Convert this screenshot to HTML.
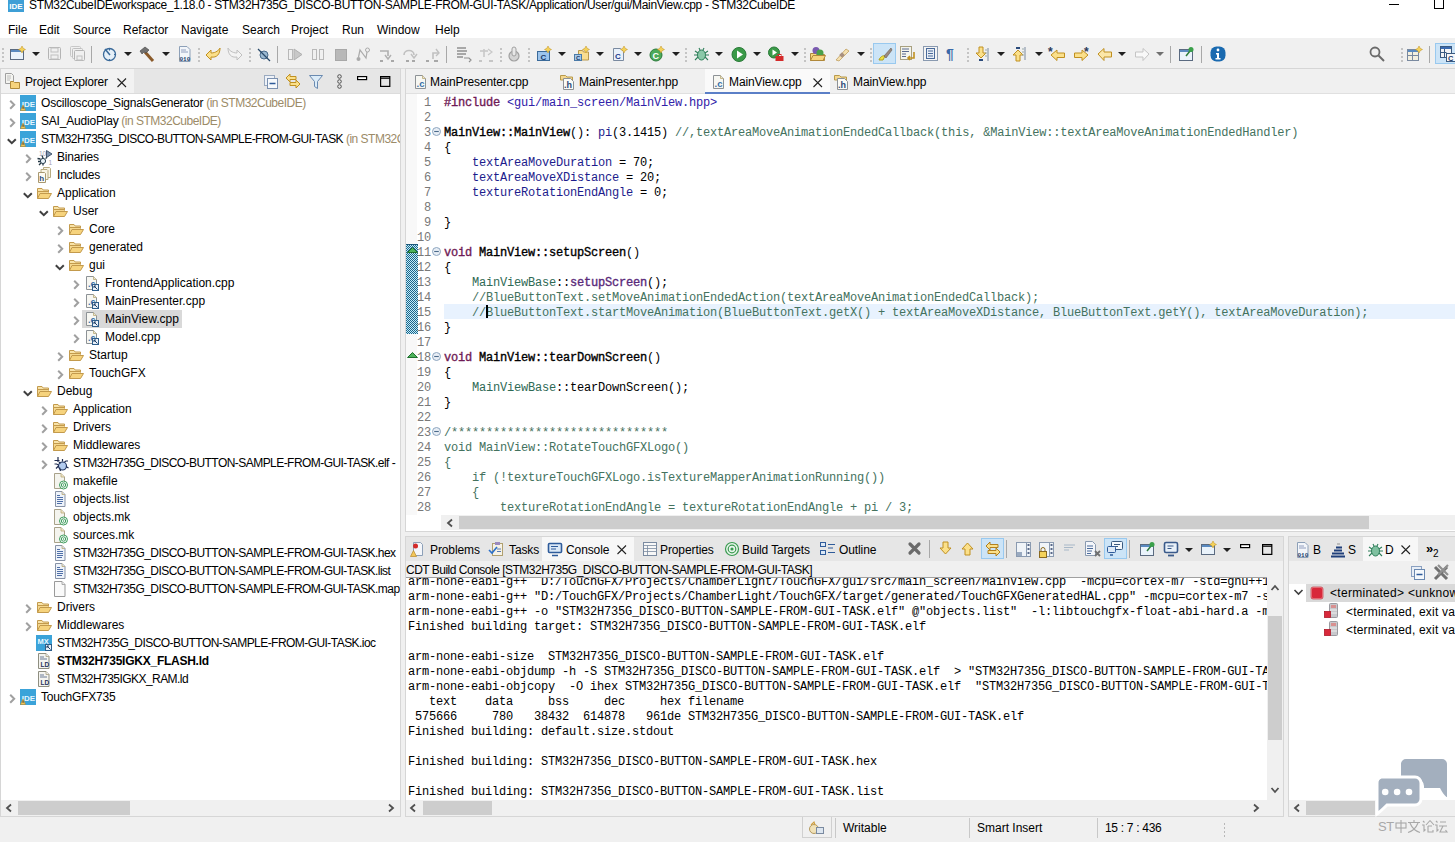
<!DOCTYPE html><html><head><meta charset="utf-8"><style>
*{margin:0;padding:0;box-sizing:border-box}
html,body{width:1455px;height:842px;overflow:hidden;background:#f0f0f0;font-family:"Liberation Sans",sans-serif;font-size:12px;color:#000}
.a{position:absolute}
.t{position:absolute;white-space:pre;line-height:14px;font-size:12px}
.m{position:absolute;white-space:pre;font-family:"Liberation Mono",monospace;font-size:12px;letter-spacing:-0.2px;line-height:15px}
svg{position:absolute;overflow:visible}
.kw{color:#6f1a55;-webkit-text-stroke:0.35px #6f1a55}
.fd{color:#1c1c8c}
.inc{color:#3020a8}
.cm{color:#44725e}
.cls{color:#2f6a55}
.fn{color:#5a2a7a;-webkit-text-stroke:0.35px #5a2a7a}
.b{-webkit-text-stroke:0.35px #000}
</style></head><body><div class="a" style="left:0px;top:0px;width:1455px;height:38px;background:#ffffff;"></div><svg style="left:8px;top:0px" width="16" height="12" viewBox="0 0 16 12"><rect x="0" y="-4" width="16" height="16" fill="#3e9fd6"/><text x="8" y="9" font-family="Liberation Sans" font-weight="bold" font-size="8" fill="#fff" text-anchor="middle">IDE</text></svg><div class="t" style="left:29px;top:-2px;letter-spacing:-0.33px">STM32CubeIDEworkspace_1.18.0 - STM32H735G_DISCO-BUTTON-SAMPLE-FROM-GUI-TASK/Application/User/gui/MainView.cpp - STM32CubeIDE</div><div class="a" style="left:1389px;top:4px;width:10px;height:1px;background:#000;"></div><div class="a" style="left:1434px;top:-2px;width:10px;height:11px;border:1px solid #000"></div><div class="t" style="left:8px;top:23px;">File</div><div class="t" style="left:39px;top:23px;">Edit</div><div class="t" style="left:73px;top:23px;">Source</div><div class="t" style="left:123px;top:23px;">Refactor</div><div class="t" style="left:181px;top:23px;">Navigate</div><div class="t" style="left:242px;top:23px;">Search</div><div class="t" style="left:291px;top:23px;">Project</div><div class="t" style="left:342px;top:23px;">Run</div><div class="t" style="left:377px;top:23px;">Window</div><div class="t" style="left:435px;top:23px;">Help</div><div class="a" style="left:0px;top:38px;width:1455px;height:30px;background:#f0f0f0;"></div><div class="a" style="left:0px;top:68px;width:1455px;height:1px;background:#dcdcdc;"></div><div class="a" style="left:2px;top:48px;width:2px;height:2px;background:#c4c4c4;"></div><div class="a" style="left:2px;top:52px;width:2px;height:2px;background:#c4c4c4;"></div><div class="a" style="left:2px;top:56px;width:2px;height:2px;background:#c4c4c4;"></div><div class="a" style="left:2px;top:60px;width:2px;height:2px;background:#c4c4c4;"></div><svg style="left:32px;top:52px" width="8" height="4" viewBox="0 0 8 4"><path d="M0 0 h8 L4 4z" fill="#202020"/></svg><svg style="left:124px;top:52px" width="8" height="4" viewBox="0 0 8 4"><path d="M0 0 h8 L4 4z" fill="#202020"/></svg><svg style="left:162px;top:52px" width="8" height="4" viewBox="0 0 8 4"><path d="M0 0 h8 L4 4z" fill="#202020"/></svg><svg style="left:558px;top:52px" width="8" height="4" viewBox="0 0 8 4"><path d="M0 0 h8 L4 4z" fill="#202020"/></svg><svg style="left:596px;top:52px" width="8" height="4" viewBox="0 0 8 4"><path d="M0 0 h8 L4 4z" fill="#202020"/></svg><svg style="left:634px;top:52px" width="8" height="4" viewBox="0 0 8 4"><path d="M0 0 h8 L4 4z" fill="#202020"/></svg><svg style="left:672px;top:52px" width="8" height="4" viewBox="0 0 8 4"><path d="M0 0 h8 L4 4z" fill="#202020"/></svg><svg style="left:715px;top:52px" width="8" height="4" viewBox="0 0 8 4"><path d="M0 0 h8 L4 4z" fill="#202020"/></svg><svg style="left:753px;top:52px" width="8" height="4" viewBox="0 0 8 4"><path d="M0 0 h8 L4 4z" fill="#202020"/></svg><svg style="left:791px;top:52px" width="8" height="4" viewBox="0 0 8 4"><path d="M0 0 h8 L4 4z" fill="#202020"/></svg><svg style="left:857px;top:52px" width="8" height="4" viewBox="0 0 8 4"><path d="M0 0 h8 L4 4z" fill="#202020"/></svg><svg style="left:997px;top:52px" width="8" height="4" viewBox="0 0 8 4"><path d="M0 0 h8 L4 4z" fill="#202020"/></svg><svg style="left:1035px;top:52px" width="8" height="4" viewBox="0 0 8 4"><path d="M0 0 h8 L4 4z" fill="#202020"/></svg><svg style="left:1118px;top:52px" width="8" height="4" viewBox="0 0 8 4"><path d="M0 0 h8 L4 4z" fill="#202020"/></svg><svg style="left:1156px;top:52px" width="8" height="4" viewBox="0 0 8 4"><path d="M0 0 h8 L4 4z" fill="#707070"/></svg><div class="a" style="left:198px;top:48px;width:2px;height:2px;background:#c4c4c4;"></div><div class="a" style="left:198px;top:52px;width:2px;height:2px;background:#c4c4c4;"></div><div class="a" style="left:198px;top:56px;width:2px;height:2px;background:#c4c4c4;"></div><div class="a" style="left:198px;top:60px;width:2px;height:2px;background:#c4c4c4;"></div><div class="a" style="left:249px;top:48px;width:2px;height:2px;background:#c4c4c4;"></div><div class="a" style="left:249px;top:52px;width:2px;height:2px;background:#c4c4c4;"></div><div class="a" style="left:249px;top:56px;width:2px;height:2px;background:#c4c4c4;"></div><div class="a" style="left:249px;top:60px;width:2px;height:2px;background:#c4c4c4;"></div><div class="a" style="left:500px;top:48px;width:2px;height:2px;background:#c4c4c4;"></div><div class="a" style="left:500px;top:52px;width:2px;height:2px;background:#c4c4c4;"></div><div class="a" style="left:500px;top:56px;width:2px;height:2px;background:#c4c4c4;"></div><div class="a" style="left:500px;top:60px;width:2px;height:2px;background:#c4c4c4;"></div><div class="a" style="left:528px;top:48px;width:2px;height:2px;background:#c4c4c4;"></div><div class="a" style="left:528px;top:52px;width:2px;height:2px;background:#c4c4c4;"></div><div class="a" style="left:528px;top:56px;width:2px;height:2px;background:#c4c4c4;"></div><div class="a" style="left:528px;top:60px;width:2px;height:2px;background:#c4c4c4;"></div><div class="a" style="left:685px;top:48px;width:2px;height:2px;background:#c4c4c4;"></div><div class="a" style="left:685px;top:52px;width:2px;height:2px;background:#c4c4c4;"></div><div class="a" style="left:685px;top:56px;width:2px;height:2px;background:#c4c4c4;"></div><div class="a" style="left:685px;top:60px;width:2px;height:2px;background:#c4c4c4;"></div><div class="a" style="left:804px;top:48px;width:2px;height:2px;background:#c4c4c4;"></div><div class="a" style="left:804px;top:52px;width:2px;height:2px;background:#c4c4c4;"></div><div class="a" style="left:804px;top:56px;width:2px;height:2px;background:#c4c4c4;"></div><div class="a" style="left:804px;top:60px;width:2px;height:2px;background:#c4c4c4;"></div><div class="a" style="left:870px;top:48px;width:2px;height:2px;background:#c4c4c4;"></div><div class="a" style="left:870px;top:52px;width:2px;height:2px;background:#c4c4c4;"></div><div class="a" style="left:870px;top:56px;width:2px;height:2px;background:#c4c4c4;"></div><div class="a" style="left:870px;top:60px;width:2px;height:2px;background:#c4c4c4;"></div><div class="a" style="left:967px;top:48px;width:2px;height:2px;background:#c4c4c4;"></div><div class="a" style="left:967px;top:52px;width:2px;height:2px;background:#c4c4c4;"></div><div class="a" style="left:967px;top:56px;width:2px;height:2px;background:#c4c4c4;"></div><div class="a" style="left:967px;top:60px;width:2px;height:2px;background:#c4c4c4;"></div><div class="a" style="left:1401px;top:48px;width:2px;height:2px;background:#c4c4c4;"></div><div class="a" style="left:1401px;top:52px;width:2px;height:2px;background:#c4c4c4;"></div><div class="a" style="left:1401px;top:56px;width:2px;height:2px;background:#c4c4c4;"></div><div class="a" style="left:1401px;top:60px;width:2px;height:2px;background:#c4c4c4;"></div><div class="a" style="left:91px;top:46px;width:1px;height:17px;background:#a8a8a8;"></div><div class="a" style="left:277px;top:46px;width:1px;height:17px;background:#a8a8a8;"></div><div class="a" style="left:446px;top:46px;width:1px;height:17px;background:#a8a8a8;"></div><div class="a" style="left:1170px;top:46px;width:1px;height:17px;background:#a8a8a8;"></div><div class="a" style="left:1201px;top:46px;width:1px;height:17px;background:#a8a8a8;"></div><div class="a" style="left:1429px;top:46px;width:1px;height:17px;background:#a8a8a8;"></div><div class="a" style="left:873px;top:43px;width:23px;height:21px;background:#cce4f7;border:1px solid #99c9ef"></div><div class="a" style="left:1435px;top:43px;width:20px;height:21px;background:#cce4f7;border:1px solid #99c9ef;border-right:none"></div><svg style="left:877px;top:46px" width="16" height="16" viewBox="0 0 16 16"><path d="M2 14 C3 11 6 9 8 10 L6 14Z" fill="#f0e040" stroke="#b0a020"/><path d="M7 10 L14 2 L15 4 L9 12Z" fill="#9a8a80" stroke="#6a5a50" stroke-width="0.6"/></svg><svg style="left:1440px;top:46px" width="16" height="16" viewBox="0 0 16 16"><rect x="0.5" y="0.5" width="11" height="11" fill="#f4f4f4" stroke="#3a5a80"/><rect x="1" y="1" width="10" height="2" fill="#3a6ab0"/><path d="M0.5 6.5 h6 M4.5 3 v8" stroke="#3a5a80"/><rect x="6.5" y="7.5" width="9" height="8" fill="#f8f8f8" stroke="#3a5a80"/><text x="8" y="14.5" font-family="Liberation Sans" font-weight="bold" font-size="7.5" fill="#1a3a6a">C</text></svg><svg style="left:10px;top:46px" width="16" height="16" viewBox="0 0 16 16"><rect x="0.5" y="3.5" width="13" height="10" fill="#eaf3fb" stroke="#5a6a80" stroke-width="1"/><rect x="1" y="4" width="12" height="2" fill="#5a8ac0"/><path d="M12 0 l1.2 2.3 2.3 1.2 -2.3 1.2 -1.2 2.3 -1.2 -2.3 -2.3 -1.2 2.3 -1.2z" fill="#f4d25a" stroke="#c09020" stroke-width="0.5"/></svg><svg style="left:47px;top:46px" width="16" height="16" viewBox="0 0 16 16"><rect x="1.5" y="1.5" width="12" height="12" rx="1" fill="none" stroke="#b4b4b4" stroke-width="1"/><rect x="4" y="2" width="7" height="4" fill="none" stroke="#c0c0c0"/><rect x="4" y="9" width="7" height="4" fill="none" stroke="#c0c0c0"/></svg><svg style="left:70px;top:46px" width="16" height="16" viewBox="0 0 16 16"><rect x="0.5" y="0.5" width="10" height="10" rx="1" fill="none" stroke="#c8c8c8"/><rect x="2.5" y="2.5" width="10" height="10" rx="1" fill="#f0f0f0" stroke="#c0c0c0"/><rect x="4.5" y="4.5" width="10" height="10" rx="1" fill="#f0f0f0" stroke="#b4b4b4"/><rect x="7" y="10" width="5" height="4" fill="none" stroke="#c0c0c0"/></svg><svg style="left:102px;top:46px" width="16" height="16" viewBox="0 0 16 16"><circle cx="7.5" cy="8.5" r="6" fill="#e6f0f8" stroke="#3a6a9a" stroke-width="1.3"/><path d="M3 3 L8 9" stroke="#3a6a9a" stroke-width="1.5"/><path d="M7.5 3 v1.5 M12 8.5 h1.5 M7.5 13 v1.5" stroke="#3a6a9a"/></svg><svg style="left:139px;top:46px" width="16" height="16" viewBox="0 0 16 16"><path d="M6 6 L14 15" stroke="#8a5a2a" stroke-width="3"/><path d="M1 5 L6 1 L10 4 L7 7 L5 6 L3 8Z" fill="#707070" stroke="#404040" stroke-width="0.6"/></svg><svg style="left:177px;top:46px" width="16" height="16" viewBox="0 0 16 16"><path d="M2.5 0.5 h7.5 l3 3 v12 h-10.5z" fill="#f3f6fa" stroke="#8da0b8" stroke-width="1"/><path d="M4 4 h5 M4 6 h7" stroke="#7a8ab0" stroke-width="0.8"/><text x="2.5" y="14.5" font-family="Liberation Mono" font-weight="bold" font-size="6" fill="#1f3f6a">010</text></svg><svg style="left:205px;top:46px" width="16" height="16" viewBox="0 0 16 16"><path d="M1 9 L6 4 L6 7 C11 7 14 4 15 2 C15 8 12 12 6 11 L6 14Z" fill="#fbe08a" stroke="#c09020" stroke-width="1"/></svg><svg style="left:227px;top:46px" width="16" height="16" viewBox="0 0 16 16"><path d="M15 9 L10 4 L10 7 C5 7 2 4 1 2 C1 8 4 12 10 11 L10 14Z" fill="#f4f4f4" stroke="#c0c0c0" stroke-width="1"/></svg><svg style="left:256px;top:46px" width="16" height="16" viewBox="0 0 16 16"><circle cx="8" cy="9" r="4" fill="#9ab8d0" stroke="#4a6a8a" stroke-width="1"/><path d="M2 3 L14 15" stroke="#2a4a6a" stroke-width="1.3"/></svg><svg style="left:287px;top:46px" width="16" height="16" viewBox="0 0 16 16"><rect x="1.5" y="3.5" width="4" height="10" fill="none" stroke="#b8b8b8"/><path d="M7 3 L15 8.5 L7 14Z" fill="#c8c8c8" stroke="#b0b0b0"/></svg><svg style="left:310px;top:46px" width="16" height="16" viewBox="0 0 16 16"><rect x="2.5" y="3.5" width="4" height="10" fill="none" stroke="#b8b8b8"/><rect x="9.5" y="3.5" width="4" height="10" fill="none" stroke="#b8b8b8"/></svg><svg style="left:333px;top:46px" width="16" height="16" viewBox="0 0 16 16"><rect x="2.5" y="3.5" width="11" height="11" fill="#b8b8b8" stroke="#a8a8a8"/></svg><svg style="left:355px;top:46px" width="16" height="16" viewBox="0 0 16 16"><circle cx="3.5" cy="13" r="2" fill="#aaa"/><circle cx="12.5" cy="4" r="2" fill="none" stroke="#aaa"/><path d="M3.5 11 L5 4 L11 12 L12 6" stroke="#aaa" stroke-width="1.2" fill="none"/></svg><svg style="left:379px;top:46px" width="16" height="16" viewBox="0 0 16 16"><path d="M1 5 h8 v5" stroke="#b0b0b0" stroke-width="1.6" fill="none"/><path d="M6 9 L9 13 L12 9" stroke="#b0b0b0" stroke-width="1.4" fill="none"/><path d="M1 15 h3 M12 15 h3" stroke="#909090" stroke-width="1.5"/></svg><svg style="left:402px;top:46px" width="16" height="16" viewBox="0 0 16 16"><path d="M2 9 C2 3 12 3 12 9" stroke="#c0c0c0" stroke-width="1.6" fill="none"/><path d="M9 8 L12 12 L15 8" stroke="#c0c0c0" stroke-width="1.4" fill="none"/><path d="M4 15 h3 M10 15 h3" stroke="#909090" stroke-width="1.5"/></svg><svg style="left:425px;top:46px" width="16" height="16" viewBox="0 0 16 16"><path d="M8 13 v-6 h5" stroke="#c0c0c0" stroke-width="1.6" fill="none"/><path d="M11 3 L14 7 L11 10" stroke="#c0c0c0" stroke-width="1.4" fill="none"/><path d="M1 15 h3 M9 15 h4" stroke="#909090" stroke-width="1.5"/></svg><svg style="left:456px;top:46px" width="16" height="16" viewBox="0 0 16 16"><path d="M1 2 h9 M1 5 h10 M1 8 h9 M1 11 h6" stroke="#909090" stroke-width="1.5"/><path d="M8 12 h5 l2 2 -2 2" stroke="#909090" stroke-width="1.2" fill="none"/></svg><svg style="left:478px;top:46px" width="16" height="16" viewBox="0 0 16 16"><path d="M2 5 h8" stroke="#c8c8c8" stroke-width="1.6"/><path d="M6 3 v8" stroke="#c8c8c8" stroke-width="1.6"/><path d="M10 3 L14 6 L10 9" stroke="#c8c8c8" stroke-width="1.2" fill="none"/><path d="M1 15 h3 M11 15 h4" stroke="#b8b8b8" stroke-width="1.5"/></svg><svg style="left:506px;top:46px" width="16" height="16" viewBox="0 0 16 16"><circle cx="8" cy="10" r="5" fill="#d4d4d4" stroke="#a0a0a0" stroke-width="1.2"/><rect x="6" y="1" width="4" height="9" rx="2" fill="#e8e8e8" stroke="#a0a0a0"/></svg><svg style="left:536px;top:46px" width="16" height="16" viewBox="0 0 16 16"><rect x="1.5" y="5.5" width="12" height="9" fill="#9cc4ec" stroke="#3a6a9a" stroke-width="1"/><text x="4.5" y="13.5" font-family="Liberation Sans" font-weight="bold" font-size="8" fill="#1a3a6a">C</text><path d="M12 0 l1.2 2.3 2.3 1.2 -2.3 1.2 -1.2 2.3 -1.2 -2.3 -2.3 -1.2 2.3 -1.2z" fill="#f4d25a" stroke="#c09020" stroke-width="0.5"/></svg><svg style="left:574px;top:46px" width="16" height="16" viewBox="0 0 16 16"><path d="M4.5 4.5 h4 l1 1.5 h5 v8 h-10z" fill="#f8dd90" stroke="#b8984c"/><rect x="0.5" y="8.5" width="7" height="6" fill="#a8c8e8" stroke="#4a7aa8"/><text x="2" y="14" font-family="Liberation Sans" font-weight="bold" font-size="6" fill="#1a3a6a">C</text><path d="M12 0 l1.2 2.3 2.3 1.2 -2.3 1.2 -1.2 2.3 -1.2 -2.3 -2.3 -1.2 2.3 -1.2z" fill="#f4d25a" stroke="#c09020" stroke-width="0.5"/></svg><svg style="left:612px;top:46px" width="16" height="16" viewBox="0 0 16 16"><path d="M1.5 2.5 h7 l3 3 v9 h-10z" fill="#e8f0fa" stroke="#7a8aa0"/><text x="3" y="13" font-family="Liberation Sans" font-weight="bold" font-size="8" fill="#1a3a8a">C</text><path d="M12 0 l1.2 2.3 2.3 1.2 -2.3 1.2 -1.2 2.3 -1.2 -2.3 -2.3 -1.2 2.3 -1.2z" fill="#f4d25a" stroke="#c09020" stroke-width="0.5"/></svg><svg style="left:649px;top:46px" width="16" height="16" viewBox="0 0 16 16"><circle cx="7" cy="9" r="6" fill="#4caa5a" stroke="#2a7a3a"/><text x="3.6" y="12.5" font-family="Liberation Sans" font-weight="bold" font-size="9" fill="#fff">C</text><path d="M12 0 l1.2 2.3 2.3 1.2 -2.3 1.2 -1.2 2.3 -1.2 -2.3 -2.3 -1.2 2.3 -1.2z" fill="#f4d25a" stroke="#c09020" stroke-width="0.5"/></svg><svg style="left:693px;top:46px" width="16" height="16" viewBox="0 0 16 16"><ellipse cx="8.5" cy="9" rx="4" ry="5" fill="#8ac8a8" stroke="#2f7f5a" stroke-width="1"/><path d="M2 5 L5 7 M15 5 L12 7 M1 9 h3 M13 9 h3 M2 14 L5 11 M15 14 L12 11 M6 2 L7 4 M11 2 L10 4" stroke="#2f7f5a" stroke-width="1.1"/></svg><svg style="left:731px;top:46px" width="16" height="16" viewBox="0 0 16 16"><circle cx="8" cy="8.5" r="7" fill="#3a9a48" stroke="#2a7a38"/><path d="M6 4.5 L12 8.5 L6 12.5Z" fill="#fff"/></svg><svg style="left:768px;top:46px" width="16" height="16" viewBox="0 0 16 16"><circle cx="6" cy="6.5" r="5.5" fill="#3a9a48" stroke="#2a7a38"/><path d="M4.5 3.5 L9 6.5 L4.5 9.5Z" fill="#fff"/><rect x="7.5" y="10" width="8" height="5" fill="#d42a2a"/><rect x="10" y="8.5" width="3" height="2" fill="none" stroke="#d42a2a"/></svg><svg style="left:810px;top:46px" width="16" height="16" viewBox="0 0 16 16"><path d="M0.5 7.5 h5 l1 1 h8 v6 h-14z" fill="#f8d880" stroke="#b0883a"/><circle cx="6" cy="4.5" r="3.5" fill="#7a5ab0"/><circle cx="10" cy="7" r="3.5" fill="#4aa04a"/><path d="M0.5 14.5 L3 9.5 H15.5 L13 14.5Z" fill="#f6d37d" stroke="#b0883a"/></svg><svg style="left:834px;top:46px" width="16" height="16" viewBox="0 0 16 16"><path d="M2 14 L12 3 L15 5 L5 15Z" fill="#f4e0b0" stroke="#c0a060" stroke-width="0.8"/><rect x="6" y="7" width="4" height="4" transform="rotate(45 8 9)" fill="#a89080"/></svg><svg style="left:900px;top:46px" width="16" height="16" viewBox="0 0 16 16"><rect x="0.5" y="0.5" width="11" height="13" fill="#f4f4ec" stroke="#a8a080"/><path d="M2 3 h7 M2 5.5 h7 M2 8 h4 M2 10.5 h4" stroke="#5a6a90"/><path d="M14 6 v6 h-6 M10 10 L8 12 L10 14" stroke="#c09020" stroke-width="1.6" fill="none"/></svg><svg style="left:923px;top:46px" width="16" height="16" viewBox="0 0 16 16"><rect x="0.5" y="0.5" width="14" height="14" fill="#f4f4f4" stroke="#8a9ab0"/><rect x="3.5" y="2.5" width="8" height="10" fill="#e8eef6" stroke="#4a6a9a"/><path d="M5 5 h5 M5 7.5 h5 M5 10 h5" stroke="#4a6a9a"/></svg><svg style="left:946px;top:46px" width="16" height="16" viewBox="0 0 16 16"><text x="0" y="13" font-family="Liberation Sans" font-weight="bold" font-size="14" fill="#3a6aa8">¶</text></svg><svg style="left:975px;top:46px" width="16" height="16" viewBox="0 0 16 16"><path d="M4 1 h4 v6 h3 L6 12 L1 7 h3z" fill="#fbe08a" stroke="#c09020"/><path d="M13 2 v13" stroke="#7a8aa0"/><path d="M10 4 h2 M10 7 h2 M10 10 h2" stroke="#9aa" /><rect x="4" y="13" width="4" height="2" fill="#2a4a7a"/></svg><svg style="left:1012px;top:46px" width="16" height="16" viewBox="0 0 16 16"><path d="M4 15 h4 v-6 h3 L6 4 L1 9 h3z" fill="#fbe08a" stroke="#c09020"/><path d="M13 1 v13" stroke="#7a8aa0"/><path d="M10 3 h2 M10 6 h2 M10 9 h2" stroke="#9aa"/><rect x="4" y="1" width="4" height="2" fill="#2a4a7a"/></svg><svg style="left:1049px;top:46px" width="16" height="16" viewBox="0 0 16 16"><path d="M2 9 L8 4 v3 h7.5 v4.5 h-7.5 v3z" fill="#fbe08a" stroke="#c09020"/><text x="-1" y="10" font-family="Liberation Sans" font-weight="bold" font-size="12" fill="#2a3a5a">*</text></svg><svg style="left:1073px;top:46px" width="16" height="16" viewBox="0 0 16 16"><path d="M15 9 L9 4 v3 h-7.5 v4.5 h7.5 v3z" fill="#fbe08a" stroke="#c09020"/><text x="11" y="10" font-family="Liberation Sans" font-weight="bold" font-size="12" fill="#2a3a5a">*</text></svg><svg style="left:1097px;top:46px" width="16" height="16" viewBox="0 0 16 16"><path d="M1 8 L7 2.5 v3.5 h7.5 v5 h-7.5 v3.5z" fill="#fbe6a8" stroke="#c09020"/></svg><svg style="left:1134px;top:46px" width="16" height="16" viewBox="0 0 16 16"><path d="M15 8 L9 2.5 v3.5 h-7.5 v5 h7.5 v3.5z" fill="#f8f8f8" stroke="#c4c4c4"/></svg><svg style="left:1179px;top:46px" width="16" height="16" viewBox="0 0 16 16"><rect x="0.5" y="3.5" width="13" height="11" fill="#eaf3fb" stroke="#5a6a80"/><rect x="1" y="4" width="12" height="2" fill="#5a8ac0"/><path d="M7 10 L11 5" stroke="#2a7a3a" stroke-width="1.5"/><circle cx="12" cy="3.5" r="2.5" fill="#3aa04a"/></svg><svg style="left:1210px;top:46px" width="16" height="16" viewBox="0 0 16 16"><rect x="0.5" y="0.5" width="15" height="15" rx="6" fill="#1a6ab0"/><circle cx="8" cy="4" r="1.4" fill="#fff"/><path d="M6 7 h3 v5 h1.5 v1.5 h-5 v-1.5 h1.5 v-3.5 h-1z" fill="#fff"/></svg><svg style="left:1369px;top:46px" width="16" height="16" viewBox="0 0 16 16"><circle cx="6" cy="6" r="4.5" fill="none" stroke="#6a6a6a" stroke-width="1.8"/><path d="M9.5 9.5 L15 15" stroke="#6a6a6a" stroke-width="2"/></svg><svg style="left:1407px;top:46px" width="16" height="16" viewBox="0 0 16 16"><rect x="0.5" y="3.5" width="11" height="11" fill="#f4f0e0" stroke="#7a8aa0"/><rect x="1" y="4" width="10" height="2" fill="#5a8ac0"/><path d="M0.5 9.5 h11 M5.5 6 v9" stroke="#7a8aa0"/><path d="M12 0 l1.2 2.3 2.3 1.2 -2.3 1.2 -1.2 2.3 -1.2 -2.3 -2.3 -1.2 2.3 -1.2z" fill="#f4d25a" stroke="#c09020" stroke-width="0.5"/></svg><div class="a" style="left:0px;top:68px;width:401px;height:749px;background:#ffffff;border:1px solid #d6d6d6"></div><div class="a" style="left:1px;top:69px;width:399px;height:25px;background:#e6e6e6;"></div><div class="a" style="left:1px;top:69px;width:133px;height:25px;background:#f2f2f2;"></div><div class="a" style="left:1px;top:93px;width:399px;height:1px;background:#dcdcdc;"></div><div class="t" style="left:25px;top:75px;letter-spacing:-0.15px">Project Explorer</div><div class="a" style="left:405px;top:68px;width:1050px;height:464px;background:#ffffff;border:1px solid #d6d6d6;border-right:none"></div><div class="a" style="left:406px;top:69px;width:1049px;height:25px;background:#f0f0f0;"></div><div class="a" style="left:406px;top:93px;width:1049px;height:1px;background:#e0e0e0;"></div><div class="a" style="left:405px;top:536px;width:879px;height:281px;background:#ffffff;border:1px solid #d6d6d6"></div><div class="a" style="left:406px;top:537px;width:877px;height:41px;background:#f0f0f0;"></div><div class="a" style="left:1288px;top:536px;width:167px;height:281px;background:#ffffff;border:1px solid #d6d6d6;border-right:none"></div><div class="a" style="left:1289px;top:537px;width:166px;height:48px;background:#f0f0f0;"></div><div class="a" style="left:1px;top:94px;width:399px;height:706px;overflow:hidden"><div class="a" style="left:81px;top:216px;width:100px;height:18px;background:#d9d9d9;"></div><svg style="left:8px;top:6px" width="7" height="10" viewBox="0 0 7 10"><path d="M1.2 0.8 L5.2 4.8 L1.2 8.8" stroke="#a0a0a0" stroke-width="2" fill="none"/></svg><svg style="left:19px;top:1px" width="16" height="16" viewBox="0 0 16 16"><rect x="0" y="0" width="16" height="16" fill="#3ba3d9"/><text x="8.5" y="11.5" font-family="Liberation Sans" font-weight="bold" font-size="8" fill="#e6f6ff" text-anchor="middle">IDE</text><path d="M0.5 15.5 L3 10 L5.5 15.5Z" fill="#f3c65a" stroke="#b88a2a" stroke-width="0.6"/><rect x="2.6" y="11.5" width="0.9" height="2.4" fill="#333"/></svg><div class="t" style="left:40px;top:2px;letter-spacing:-0.2px">Oscilloscope_SignalsGenerator<span style="color:#9c8b68;letter-spacing:-0.5px"> (in STM32CubeIDE)</span></div><svg style="left:8px;top:24px" width="7" height="10" viewBox="0 0 7 10"><path d="M1.2 0.8 L5.2 4.8 L1.2 8.8" stroke="#a0a0a0" stroke-width="2" fill="none"/></svg><svg style="left:19px;top:19px" width="16" height="16" viewBox="0 0 16 16"><rect x="0" y="0" width="16" height="16" fill="#3ba3d9"/><text x="8.5" y="11.5" font-family="Liberation Sans" font-weight="bold" font-size="8" fill="#e6f6ff" text-anchor="middle">IDE</text><path d="M0.5 15.5 L3 10 L5.5 15.5Z" fill="#f3c65a" stroke="#b88a2a" stroke-width="0.6"/><rect x="2.6" y="11.5" width="0.9" height="2.4" fill="#333"/></svg><div class="t" style="left:40px;top:20px;letter-spacing:-0.2px">SAI_AudioPlay<span style="color:#9c8b68;letter-spacing:-0.5px"> (in STM32CubeIDE)</span></div><svg style="left:6px;top:44px" width="10" height="7" viewBox="0 0 10 7"><path d="M0.8 1.2 L4.8 5.2 L8.8 1.2" stroke="#404040" stroke-width="2" fill="none"/></svg><svg style="left:19px;top:37px" width="16" height="16" viewBox="0 0 16 16"><rect x="0" y="0" width="16" height="16" fill="#3ba3d9"/><text x="8.5" y="11.5" font-family="Liberation Sans" font-weight="bold" font-size="8" fill="#e6f6ff" text-anchor="middle">IDE</text><path d="M0.5 15.5 L3 10 L5.5 15.5Z" fill="#f3c65a" stroke="#b88a2a" stroke-width="0.6"/><rect x="2.6" y="11.5" width="0.9" height="2.4" fill="#333"/></svg><div class="t" style="left:40px;top:38px;letter-spacing:-0.55px">STM32H735G_DISCO-BUTTON-SAMPLE-FROM-GUI-TASK<span style="color:#9c8b68;letter-spacing:-0.5px"> (in STM32CubeIDE)</span></div><svg style="left:24px;top:60px" width="7" height="10" viewBox="0 0 7 10"><path d="M1.2 0.8 L5.2 4.8 L1.2 8.8" stroke="#a0a0a0" stroke-width="2" fill="none"/></svg><svg style="left:35px;top:55px" width="16" height="16" viewBox="0 0 16 16"><text x="3" y="7" font-family="Liberation Sans" font-size="6.5" fill="#a0a0b0">10</text><path d="M10.5 1.5 L16 5 L10.5 8.5Z" fill="#7d93ad" stroke="#44566e" stroke-width="1"/><circle cx="7" cy="12" r="2.6" fill="#e8f2f8" stroke="#2a4050" stroke-width="1"/><path d="M1.5 9.5 L4.5 10 M6 6.5 L7 9 M2 12.5 h2.5 M3 16 L5 14 M7 15 v1.5 M9.5 9.5 l1.5 -1" stroke="#253845" stroke-width="1.3"/><text x="12.5" y="16" font-family="Liberation Sans" font-size="6.5" fill="#a0a0b0">1</text></svg><div class="t" style="left:56px;top:56px;letter-spacing:-0.2px">Binaries</div><svg style="left:24px;top:78px" width="7" height="10" viewBox="0 0 7 10"><path d="M1.2 0.8 L5.2 4.8 L1.2 8.8" stroke="#a0a0a0" stroke-width="2" fill="none"/></svg><svg style="left:35px;top:73px" width="16" height="16" viewBox="0 0 16 16"><path d="M7.5 0.5 h6 l1 1 v9 h-7z" fill="#f8f4e4" stroke="#b8ab80" stroke-width="1"/><path d="M5 2.5 h6 l1 1 v9 h-7z" fill="#f8f4e4" stroke="#b8ab80" stroke-width="1"/><path d="M2.5 5.5 h6 l1 1 v9 h-7z" fill="#fdfbf2" stroke="#a89870" stroke-width="1"/><text x="3.2" y="14" font-family="Liberation Sans" font-weight="bold" font-size="8" fill="#2e4a78">h</text></svg><div class="t" style="left:56px;top:74px;letter-spacing:-0.2px">Includes</div><svg style="left:22px;top:98px" width="10" height="7" viewBox="0 0 10 7"><path d="M0.8 1.2 L4.8 5.2 L8.8 1.2" stroke="#404040" stroke-width="2" fill="none"/></svg><svg style="left:35px;top:91px" width="16" height="16" viewBox="0 0 16 16"><path d="M1.5 3.5 h4.5 l1.2 1.5 h5.3 v2 h-11z" fill="#f8e3a8" stroke="#c39a4c" stroke-width="1"/><path d="M1.5 13.5 v-7 h11 v1" fill="#f5d88f" stroke="#c39a4c" stroke-width="1"/><path d="M1.5 13.5 L4 8.5 H15.5 L12.5 13.5Z" fill="#f6d37d" stroke="#c39a4c" stroke-width="1"/></svg><div class="t" style="left:56px;top:92px;">Application</div><svg style="left:38px;top:116px" width="10" height="7" viewBox="0 0 10 7"><path d="M0.8 1.2 L4.8 5.2 L8.8 1.2" stroke="#404040" stroke-width="2" fill="none"/></svg><svg style="left:51px;top:109px" width="16" height="16" viewBox="0 0 16 16"><path d="M1.5 3.5 h4.5 l1.2 1.5 h5.3 v2 h-11z" fill="#f8e3a8" stroke="#c39a4c" stroke-width="1"/><path d="M1.5 13.5 v-7 h11 v1" fill="#f5d88f" stroke="#c39a4c" stroke-width="1"/><path d="M1.5 13.5 L4 8.5 H15.5 L12.5 13.5Z" fill="#f6d37d" stroke="#c39a4c" stroke-width="1"/></svg><div class="t" style="left:72px;top:110px;">User</div><svg style="left:56px;top:132px" width="7" height="10" viewBox="0 0 7 10"><path d="M1.2 0.8 L5.2 4.8 L1.2 8.8" stroke="#a0a0a0" stroke-width="2" fill="none"/></svg><svg style="left:67px;top:127px" width="16" height="16" viewBox="0 0 16 16"><path d="M1.5 3.5 h4.5 l1.2 1.5 h5.3 v2 h-11z" fill="#f8e3a8" stroke="#c39a4c" stroke-width="1"/><path d="M1.5 13.5 v-7 h11 v1" fill="#f5d88f" stroke="#c39a4c" stroke-width="1"/><path d="M1.5 13.5 L4 8.5 H15.5 L12.5 13.5Z" fill="#f6d37d" stroke="#c39a4c" stroke-width="1"/></svg><div class="t" style="left:88px;top:128px;">Core</div><svg style="left:56px;top:150px" width="7" height="10" viewBox="0 0 7 10"><path d="M1.2 0.8 L5.2 4.8 L1.2 8.8" stroke="#a0a0a0" stroke-width="2" fill="none"/></svg><svg style="left:67px;top:145px" width="16" height="16" viewBox="0 0 16 16"><path d="M1.5 3.5 h4.5 l1.2 1.5 h5.3 v2 h-11z" fill="#f8e3a8" stroke="#c39a4c" stroke-width="1"/><path d="M1.5 13.5 v-7 h11 v1" fill="#f5d88f" stroke="#c39a4c" stroke-width="1"/><path d="M1.5 13.5 L4 8.5 H15.5 L12.5 13.5Z" fill="#f6d37d" stroke="#c39a4c" stroke-width="1"/></svg><div class="t" style="left:88px;top:146px;">generated</div><svg style="left:54px;top:170px" width="10" height="7" viewBox="0 0 10 7"><path d="M0.8 1.2 L4.8 5.2 L8.8 1.2" stroke="#404040" stroke-width="2" fill="none"/></svg><svg style="left:67px;top:163px" width="16" height="16" viewBox="0 0 16 16"><path d="M1.5 3.5 h4.5 l1.2 1.5 h5.3 v2 h-11z" fill="#f8e3a8" stroke="#c39a4c" stroke-width="1"/><path d="M1.5 13.5 v-7 h11 v1" fill="#f5d88f" stroke="#c39a4c" stroke-width="1"/><path d="M1.5 13.5 L4 8.5 H15.5 L12.5 13.5Z" fill="#f6d37d" stroke="#c39a4c" stroke-width="1"/></svg><div class="t" style="left:88px;top:164px;">gui</div><svg style="left:72px;top:186px" width="7" height="10" viewBox="0 0 7 10"><path d="M1.2 0.8 L5.2 4.8 L1.2 8.8" stroke="#a0a0a0" stroke-width="2" fill="none"/></svg><svg style="left:83px;top:181px" width="16" height="16" viewBox="0 0 16 16"><path d="M2.5 1.5 h7 l3 3 v10 h-10z" fill="#f7f7f2" stroke="#8d9296" stroke-width="1"/><path d="M9.5 1.5 v3 h3" fill="#f0e6c8" stroke="#b8a878" stroke-width="0.8"/><text x="4" y="12" font-family="Liberation Sans" font-weight="bold" font-size="9" fill="#3a6fa8">.c</text><rect x="8.5" y="9.5" width="6" height="6" fill="#e8f0f8" stroke="#2d5d8a" stroke-width="1"/><path d="M10 11 L13.5 14.5 M10 11 h2 M10 11 v2" stroke="#1f3f66" stroke-width="1"/></svg><div class="t" style="left:104px;top:182px;">FrontendApplication.cpp</div><svg style="left:72px;top:204px" width="7" height="10" viewBox="0 0 7 10"><path d="M1.2 0.8 L5.2 4.8 L1.2 8.8" stroke="#a0a0a0" stroke-width="2" fill="none"/></svg><svg style="left:83px;top:199px" width="16" height="16" viewBox="0 0 16 16"><path d="M2.5 1.5 h7 l3 3 v10 h-10z" fill="#f7f7f2" stroke="#8d9296" stroke-width="1"/><path d="M9.5 1.5 v3 h3" fill="#f0e6c8" stroke="#b8a878" stroke-width="0.8"/><text x="4" y="12" font-family="Liberation Sans" font-weight="bold" font-size="9" fill="#3a6fa8">.c</text><rect x="8.5" y="9.5" width="6" height="6" fill="#e8f0f8" stroke="#2d5d8a" stroke-width="1"/><path d="M10 11 L13.5 14.5 M10 11 h2 M10 11 v2" stroke="#1f3f66" stroke-width="1"/></svg><div class="t" style="left:104px;top:200px;">MainPresenter.cpp</div><svg style="left:72px;top:222px" width="7" height="10" viewBox="0 0 7 10"><path d="M1.2 0.8 L5.2 4.8 L1.2 8.8" stroke="#a0a0a0" stroke-width="2" fill="none"/></svg><svg style="left:83px;top:217px" width="16" height="16" viewBox="0 0 16 16"><path d="M2.5 1.5 h7 l3 3 v10 h-10z" fill="#f7f7f2" stroke="#8d9296" stroke-width="1"/><path d="M9.5 1.5 v3 h3" fill="#f0e6c8" stroke="#b8a878" stroke-width="0.8"/><text x="4" y="12" font-family="Liberation Sans" font-weight="bold" font-size="9" fill="#3a6fa8">.c</text><rect x="8.5" y="9.5" width="6" height="6" fill="#e8f0f8" stroke="#2d5d8a" stroke-width="1"/><path d="M10 11 L13.5 14.5 M10 11 h2 M10 11 v2" stroke="#1f3f66" stroke-width="1"/></svg><div class="t" style="left:104px;top:218px;">MainView.cpp</div><svg style="left:72px;top:240px" width="7" height="10" viewBox="0 0 7 10"><path d="M1.2 0.8 L5.2 4.8 L1.2 8.8" stroke="#a0a0a0" stroke-width="2" fill="none"/></svg><svg style="left:83px;top:235px" width="16" height="16" viewBox="0 0 16 16"><path d="M2.5 1.5 h7 l3 3 v10 h-10z" fill="#f7f7f2" stroke="#8d9296" stroke-width="1"/><path d="M9.5 1.5 v3 h3" fill="#f0e6c8" stroke="#b8a878" stroke-width="0.8"/><text x="4" y="12" font-family="Liberation Sans" font-weight="bold" font-size="9" fill="#3a6fa8">.c</text><rect x="8.5" y="9.5" width="6" height="6" fill="#e8f0f8" stroke="#2d5d8a" stroke-width="1"/><path d="M10 11 L13.5 14.5 M10 11 h2 M10 11 v2" stroke="#1f3f66" stroke-width="1"/></svg><div class="t" style="left:104px;top:236px;">Model.cpp</div><svg style="left:56px;top:258px" width="7" height="10" viewBox="0 0 7 10"><path d="M1.2 0.8 L5.2 4.8 L1.2 8.8" stroke="#a0a0a0" stroke-width="2" fill="none"/></svg><svg style="left:67px;top:253px" width="16" height="16" viewBox="0 0 16 16"><path d="M1.5 3.5 h4.5 l1.2 1.5 h5.3 v2 h-11z" fill="#f8e3a8" stroke="#c39a4c" stroke-width="1"/><path d="M1.5 13.5 v-7 h11 v1" fill="#f5d88f" stroke="#c39a4c" stroke-width="1"/><path d="M1.5 13.5 L4 8.5 H15.5 L12.5 13.5Z" fill="#f6d37d" stroke="#c39a4c" stroke-width="1"/></svg><div class="t" style="left:88px;top:254px;">Startup</div><svg style="left:56px;top:276px" width="7" height="10" viewBox="0 0 7 10"><path d="M1.2 0.8 L5.2 4.8 L1.2 8.8" stroke="#a0a0a0" stroke-width="2" fill="none"/></svg><svg style="left:67px;top:271px" width="16" height="16" viewBox="0 0 16 16"><path d="M1.5 3.5 h4.5 l1.2 1.5 h5.3 v2 h-11z" fill="#f8e3a8" stroke="#c39a4c" stroke-width="1"/><path d="M1.5 13.5 v-7 h11 v1" fill="#f5d88f" stroke="#c39a4c" stroke-width="1"/><path d="M1.5 13.5 L4 8.5 H15.5 L12.5 13.5Z" fill="#f6d37d" stroke="#c39a4c" stroke-width="1"/></svg><div class="t" style="left:88px;top:272px;">TouchGFX</div><svg style="left:22px;top:296px" width="10" height="7" viewBox="0 0 10 7"><path d="M0.8 1.2 L4.8 5.2 L8.8 1.2" stroke="#404040" stroke-width="2" fill="none"/></svg><svg style="left:35px;top:289px" width="16" height="16" viewBox="0 0 16 16"><path d="M1.5 3.5 h4.5 l1.2 1.5 h5.3 v2 h-11z" fill="#f8e3a8" stroke="#c39a4c" stroke-width="1"/><path d="M1.5 13.5 v-7 h11 v1" fill="#f5d88f" stroke="#c39a4c" stroke-width="1"/><path d="M1.5 13.5 L4 8.5 H15.5 L12.5 13.5Z" fill="#f6d37d" stroke="#c39a4c" stroke-width="1"/></svg><div class="t" style="left:56px;top:290px;">Debug</div><svg style="left:40px;top:312px" width="7" height="10" viewBox="0 0 7 10"><path d="M1.2 0.8 L5.2 4.8 L1.2 8.8" stroke="#a0a0a0" stroke-width="2" fill="none"/></svg><svg style="left:51px;top:307px" width="16" height="16" viewBox="0 0 16 16"><path d="M1.5 3.5 h4.5 l1.2 1.5 h5.3 v2 h-11z" fill="#f8e3a8" stroke="#c39a4c" stroke-width="1"/><path d="M1.5 13.5 v-7 h11 v1" fill="#f5d88f" stroke="#c39a4c" stroke-width="1"/><path d="M1.5 13.5 L4 8.5 H15.5 L12.5 13.5Z" fill="#f6d37d" stroke="#c39a4c" stroke-width="1"/></svg><div class="t" style="left:72px;top:308px;">Application</div><svg style="left:40px;top:330px" width="7" height="10" viewBox="0 0 7 10"><path d="M1.2 0.8 L5.2 4.8 L1.2 8.8" stroke="#a0a0a0" stroke-width="2" fill="none"/></svg><svg style="left:51px;top:325px" width="16" height="16" viewBox="0 0 16 16"><path d="M1.5 3.5 h4.5 l1.2 1.5 h5.3 v2 h-11z" fill="#f8e3a8" stroke="#c39a4c" stroke-width="1"/><path d="M1.5 13.5 v-7 h11 v1" fill="#f5d88f" stroke="#c39a4c" stroke-width="1"/><path d="M1.5 13.5 L4 8.5 H15.5 L12.5 13.5Z" fill="#f6d37d" stroke="#c39a4c" stroke-width="1"/></svg><div class="t" style="left:72px;top:326px;">Drivers</div><svg style="left:40px;top:348px" width="7" height="10" viewBox="0 0 7 10"><path d="M1.2 0.8 L5.2 4.8 L1.2 8.8" stroke="#a0a0a0" stroke-width="2" fill="none"/></svg><svg style="left:51px;top:343px" width="16" height="16" viewBox="0 0 16 16"><path d="M1.5 3.5 h4.5 l1.2 1.5 h5.3 v2 h-11z" fill="#f8e3a8" stroke="#c39a4c" stroke-width="1"/><path d="M1.5 13.5 v-7 h11 v1" fill="#f5d88f" stroke="#c39a4c" stroke-width="1"/><path d="M1.5 13.5 L4 8.5 H15.5 L12.5 13.5Z" fill="#f6d37d" stroke="#c39a4c" stroke-width="1"/></svg><div class="t" style="left:72px;top:344px;">Middlewares</div><svg style="left:40px;top:366px" width="7" height="10" viewBox="0 0 7 10"><path d="M1.2 0.8 L5.2 4.8 L1.2 8.8" stroke="#a0a0a0" stroke-width="2" fill="none"/></svg><svg style="left:51px;top:361px" width="16" height="16" viewBox="0 0 16 16"><circle cx="10.5" cy="11" r="4" fill="#b4cdf0" stroke="#1f3360" stroke-width="1.1"/><path d="M2.5 5.5 h5 M6 2 v5 M7 7 L8.5 8.5 M2.5 9 h2 L6.5 10 M4 13.5 L6.5 11 M7.5 12.5 L8.5 16 M10.5 4 v2.5 M12.5 7 L14 6 h2 M14 11.5 L16.5 13" stroke="#1f2c50" stroke-width="1.2" fill="none"/></svg><div class="t" style="left:72px;top:362px;letter-spacing:-0.55px">STM32H735G_DISCO-BUTTON-SAMPLE-FROM-GUI-TASK.elf - </div><svg style="left:51px;top:379px" width="16" height="16" viewBox="0 0 16 16"><path d="M2.5 0.5 h6.5 l3.5 3.5 v11.5 h-10z" fill="#f4f4ee" stroke="#a9a28a" stroke-width="1"/><path d="M9 0.5 v3.5 h3.5" fill="#efe4c3" stroke="#b8a878" stroke-width="0.8"/><circle cx="11.5" cy="12" r="4" fill="#fff" stroke="#3d9c5c" stroke-width="1"/><circle cx="11.5" cy="12" r="2.2" fill="none" stroke="#3d9c5c" stroke-width="1"/><circle cx="11.5" cy="12" r="0.8" fill="#3d9c5c"/></svg><div class="t" style="left:72px;top:380px;">makefile</div><svg style="left:51px;top:397px" width="16" height="16" viewBox="0 0 16 16"><path d="M3.5 0.5 h6.5 l3 3 v12 h-9.5z" fill="#eef3fa" stroke="#8792a6" stroke-width="1"/><path d="M10 0.5 v3 h3" fill="#ddd" stroke="#b8a878" stroke-width="0.8"/><path d="M5 4.5 h3 M5 6.5 h6 M5 8.5 h6 M5 10.5 h6 M5 12.5 h5" stroke="#4f6fa8" stroke-width="1"/></svg><div class="t" style="left:72px;top:398px;">objects.list</div><svg style="left:51px;top:415px" width="16" height="16" viewBox="0 0 16 16"><path d="M2.5 0.5 h6.5 l3.5 3.5 v11.5 h-10z" fill="#f4f4ee" stroke="#a9a28a" stroke-width="1"/><path d="M9 0.5 v3.5 h3.5" fill="#efe4c3" stroke="#b8a878" stroke-width="0.8"/><circle cx="11.5" cy="12" r="4" fill="#fff" stroke="#3d9c5c" stroke-width="1"/><circle cx="11.5" cy="12" r="2.2" fill="none" stroke="#3d9c5c" stroke-width="1"/><circle cx="11.5" cy="12" r="0.8" fill="#3d9c5c"/></svg><div class="t" style="left:72px;top:416px;">objects.mk</div><svg style="left:51px;top:433px" width="16" height="16" viewBox="0 0 16 16"><path d="M2.5 0.5 h6.5 l3.5 3.5 v11.5 h-10z" fill="#f4f4ee" stroke="#a9a28a" stroke-width="1"/><path d="M9 0.5 v3.5 h3.5" fill="#efe4c3" stroke="#b8a878" stroke-width="0.8"/><circle cx="11.5" cy="12" r="4" fill="#fff" stroke="#3d9c5c" stroke-width="1"/><circle cx="11.5" cy="12" r="2.2" fill="none" stroke="#3d9c5c" stroke-width="1"/><circle cx="11.5" cy="12" r="0.8" fill="#3d9c5c"/></svg><div class="t" style="left:72px;top:434px;">sources.mk</div><svg style="left:51px;top:451px" width="16" height="16" viewBox="0 0 16 16"><path d="M3.5 0.5 h6.5 l3 3 v12 h-9.5z" fill="#eef3fa" stroke="#8792a6" stroke-width="1"/><path d="M10 0.5 v3 h3" fill="#ddd" stroke="#b8a878" stroke-width="0.8"/><path d="M5 4.5 h3 M5 6.5 h6 M5 8.5 h6 M5 10.5 h6 M5 12.5 h5" stroke="#4f6fa8" stroke-width="1"/></svg><div class="t" style="left:72px;top:452px;letter-spacing:-0.55px">STM32H735G_DISCO-BUTTON-SAMPLE-FROM-GUI-TASK.hex</div><svg style="left:51px;top:469px" width="16" height="16" viewBox="0 0 16 16"><path d="M3.5 0.5 h6.5 l3 3 v12 h-9.5z" fill="#eef3fa" stroke="#8792a6" stroke-width="1"/><path d="M10 0.5 v3 h3" fill="#ddd" stroke="#b8a878" stroke-width="0.8"/><path d="M5 4.5 h3 M5 6.5 h6 M5 8.5 h6 M5 10.5 h6 M5 12.5 h5" stroke="#4f6fa8" stroke-width="1"/></svg><div class="t" style="left:72px;top:470px;letter-spacing:-0.55px">STM32H735G_DISCO-BUTTON-SAMPLE-FROM-GUI-TASK.list</div><svg style="left:51px;top:487px" width="16" height="16" viewBox="0 0 16 16"><path d="M2.5 0.5 h7.5 l3 3 v12 h-10.5z" fill="#fafafa" stroke="#9a9a9a" stroke-width="1"/><path d="M10 0.5 v3 h3" fill="#eee" stroke="#9a9a9a" stroke-width="0.8"/></svg><div class="t" style="left:72px;top:488px;letter-spacing:-0.55px">STM32H735G_DISCO-BUTTON-SAMPLE-FROM-GUI-TASK.map</div><svg style="left:24px;top:510px" width="7" height="10" viewBox="0 0 7 10"><path d="M1.2 0.8 L5.2 4.8 L1.2 8.8" stroke="#a0a0a0" stroke-width="2" fill="none"/></svg><svg style="left:35px;top:505px" width="16" height="16" viewBox="0 0 16 16"><path d="M1.5 3.5 h4.5 l1.2 1.5 h5.3 v2 h-11z" fill="#f8e3a8" stroke="#c39a4c" stroke-width="1"/><path d="M1.5 13.5 v-7 h11 v1" fill="#f5d88f" stroke="#c39a4c" stroke-width="1"/><path d="M1.5 13.5 L4 8.5 H15.5 L12.5 13.5Z" fill="#f6d37d" stroke="#c39a4c" stroke-width="1"/></svg><div class="t" style="left:56px;top:506px;">Drivers</div><svg style="left:24px;top:528px" width="7" height="10" viewBox="0 0 7 10"><path d="M1.2 0.8 L5.2 4.8 L1.2 8.8" stroke="#a0a0a0" stroke-width="2" fill="none"/></svg><svg style="left:35px;top:523px" width="16" height="16" viewBox="0 0 16 16"><path d="M1.5 3.5 h4.5 l1.2 1.5 h5.3 v2 h-11z" fill="#f8e3a8" stroke="#c39a4c" stroke-width="1"/><path d="M1.5 13.5 v-7 h11 v1" fill="#f5d88f" stroke="#c39a4c" stroke-width="1"/><path d="M1.5 13.5 L4 8.5 H15.5 L12.5 13.5Z" fill="#f6d37d" stroke="#c39a4c" stroke-width="1"/></svg><div class="t" style="left:56px;top:524px;">Middlewares</div><svg style="left:35px;top:541px" width="16" height="16" viewBox="0 0 16 16"><rect x="0" y="0" width="16" height="16" fill="#3ba3d9"/><text x="1.5" y="9" font-family="Liberation Sans" font-weight="bold" font-size="7.5" fill="#e8f6ff">MX</text><rect x="9.5" y="9.5" width="6" height="6" fill="#e8f0f8" stroke="#2d5d8a" stroke-width="1"/><path d="M11 11 L14.5 14.5 M11 11 h2 M11 11 v2" stroke="#1f3f66" stroke-width="1"/></svg><div class="t" style="left:56px;top:542px;letter-spacing:-0.55px">STM32H735G_DISCO-BUTTON-SAMPLE-FROM-GUI-TASK.ioc</div><svg style="left:35px;top:559px" width="16" height="16" viewBox="0 0 16 16"><path d="M2.5 0.5 h7.5 l3 3 v12 h-10.5z" fill="#f4f4f0" stroke="#8e8e80" stroke-width="1"/><path d="M10 0.5 v3 h3" fill="#eee" stroke="#a8a080" stroke-width="0.8"/><path d="M4 4 h4 M4 6 h7" stroke="#6a7a96" stroke-width="1"/><text x="4.5" y="14" font-family="Liberation Sans" font-weight="bold" font-size="6.5" fill="#1f2f5a">LD</text></svg><div class="t" style="left:56px;top:560px;letter-spacing:-0.25px;font-weight:bold">STM32H735IGKX_FLASH.ld</div><svg style="left:35px;top:577px" width="16" height="16" viewBox="0 0 16 16"><path d="M2.5 0.5 h7.5 l3 3 v12 h-10.5z" fill="#f4f4f0" stroke="#8e8e80" stroke-width="1"/><path d="M10 0.5 v3 h3" fill="#eee" stroke="#a8a080" stroke-width="0.8"/><path d="M4 4 h4 M4 6 h7" stroke="#6a7a96" stroke-width="1"/><text x="4.5" y="14" font-family="Liberation Sans" font-weight="bold" font-size="6.5" fill="#1f2f5a">LD</text></svg><div class="t" style="left:56px;top:578px;letter-spacing:-0.55px">STM32H735IGKX_RAM.ld</div><svg style="left:8px;top:600px" width="7" height="10" viewBox="0 0 7 10"><path d="M1.2 0.8 L5.2 4.8 L1.2 8.8" stroke="#a0a0a0" stroke-width="2" fill="none"/></svg><svg style="left:19px;top:595px" width="16" height="16" viewBox="0 0 16 16"><rect x="0" y="0" width="16" height="16" fill="#3ba3d9"/><text x="8.5" y="11.5" font-family="Liberation Sans" font-weight="bold" font-size="8" fill="#e6f6ff" text-anchor="middle">IDE</text><path d="M0.5 15.5 L3 10 L5.5 15.5Z" fill="#f3c65a" stroke="#b88a2a" stroke-width="0.6"/><rect x="2.6" y="11.5" width="0.9" height="2.4" fill="#333"/></svg><div class="t" style="left:40px;top:596px;letter-spacing:-0.2px">TouchGFX735</div></div><div class="a" style="left:705px;top:69px;width:125px;height:24px;background:#fafafa;"></div><div class="a" style="left:705px;top:92px;width:125px;height:2px;background:#5b7fc7;"></div><svg style="left:413px;top:74px" width="16" height="16" viewBox="0 0 16 16"><path d="M2.5 1.5 h7 l3 3 v10 h-10z" fill="#f7f7f2" stroke="#8d9296" stroke-width="1"/><path d="M9.5 1.5 v3 h3" fill="#f0e6c8" stroke="#b8a878" stroke-width="0.8"/><text x="3.5" y="12.5" font-family="Liberation Sans" font-weight="bold" font-size="9.5" fill="#3a6fa8">.c</text></svg><div class="t" style="left:430px;top:75px;letter-spacing:-0.1px">MainPresenter.cpp</div><svg style="left:560px;top:74px" width="16" height="16" viewBox="0 0 16 16"><path d="M0.5 1.5 h5 l1.5 1.5 h5.5 v3 h-12z" fill="#f5d88f" stroke="#b89a4c" stroke-width="1"/><path d="M3.5 4.5 h7 l3 3 v8 h-10z" fill="#fbfbf6" stroke="#8d9296" stroke-width="1"/><text x="4" y="14" font-family="Liberation Sans" font-weight="bold" font-size="9" fill="#2e4a78">.h</text></svg><div class="t" style="left:579px;top:75px;letter-spacing:-0.1px">MainPresenter.hpp</div><svg style="left:711px;top:74px" width="16" height="16" viewBox="0 0 16 16"><path d="M2.5 1.5 h7 l3 3 v10 h-10z" fill="#f7f7f2" stroke="#8d9296" stroke-width="1"/><path d="M9.5 1.5 v3 h3" fill="#f0e6c8" stroke="#b8a878" stroke-width="0.8"/><text x="3.5" y="12.5" font-family="Liberation Sans" font-weight="bold" font-size="9.5" fill="#3a6fa8">.c</text></svg><div class="t" style="left:729px;top:75px;letter-spacing:-0.1px">MainView.cpp</div><svg style="left:834px;top:74px" width="16" height="16" viewBox="0 0 16 16"><path d="M0.5 1.5 h5 l1.5 1.5 h5.5 v3 h-12z" fill="#f5d88f" stroke="#b89a4c" stroke-width="1"/><path d="M3.5 4.5 h7 l3 3 v8 h-10z" fill="#fbfbf6" stroke="#8d9296" stroke-width="1"/><text x="4" y="14" font-family="Liberation Sans" font-weight="bold" font-size="9" fill="#2e4a78">.h</text></svg><div class="t" style="left:853px;top:75px;letter-spacing:-0.1px">MainView.hpp</div><svg style="left:813px;top:78px" width="10" height="10" viewBox="0 0 10 10"><path d="M0.5 0.5 L9 9 M9 0.5 L0.5 9" stroke="#222" stroke-width="1.1"/></svg><div class="a" style="left:444px;top:304px;width:1011px;height:15px;background:#e8f2fe;"></div><div class="a" style="left:406px;top:94px;width:11px;height:421px;background:#f8f8f8;"></div><div class="a" style="left:406px;top:244px;width:12px;height:90px;background:repeating-conic-gradient(#1f6388 0 25%,#bfeefb 0 50%) 0 0/2px 2px;border-top:1px solid #1f5a7a"></div><div class="m" style="left:424px;top:96px;color:#787878">1</div><div class="m" style="left:444px;top:96px"><span class="kw">#include</span> <span class="inc">&lt;gui/main_screen/MainView.hpp&gt;</span></div><div class="m" style="left:424px;top:111px;color:#787878">2</div><div class="m" style="left:424px;top:126px;color:#787878">3</div><div class="m" style="left:444px;top:126px"><span class="b">MainView::MainView</span>(): <span class="fd">pi</span>(3.1415) <span class="cm">//,textAreaMoveAnimationEndedCallback(this, &amp;MainView::textAreaMoveAnimationEndedHandler)</span></div><div class="m" style="left:424px;top:141px;color:#787878">4</div><div class="m" style="left:444px;top:141px">{</div><div class="m" style="left:424px;top:156px;color:#787878">5</div><div class="m" style="left:444px;top:156px">    <span class="fd">textAreaMoveDuration</span> = 70;</div><div class="m" style="left:424px;top:171px;color:#787878">6</div><div class="m" style="left:444px;top:171px">    <span class="fd">textAreaMoveXDistance</span> = 20;</div><div class="m" style="left:424px;top:186px;color:#787878">7</div><div class="m" style="left:444px;top:186px">    <span class="fd">textureRotationEndAngle</span> = 0;</div><div class="m" style="left:424px;top:201px;color:#787878">8</div><div class="m" style="left:424px;top:216px;color:#787878">9</div><div class="m" style="left:444px;top:216px">}</div><div class="m" style="left:417px;top:231px;color:#787878">10</div><div class="m" style="left:417px;top:246px;color:#787878">11</div><div class="m" style="left:444px;top:246px"><span class="kw">void</span> <span class="b">MainView::setupScreen</span>()</div><div class="m" style="left:417px;top:261px;color:#787878">12</div><div class="m" style="left:444px;top:261px">{</div><div class="m" style="left:417px;top:276px;color:#787878">13</div><div class="m" style="left:444px;top:276px">    <span class="cls">MainViewBase</span>::<span class="fn">setupScreen</span>();</div><div class="m" style="left:417px;top:291px;color:#787878">14</div><div class="m" style="left:444px;top:291px">    <span class="cm">//BlueButtonText.setMoveAnimationEndedAction(textAreaMoveAnimationEndedCallback);</span></div><div class="m" style="left:417px;top:306px;color:#787878">15</div><div class="m" style="left:444px;top:306px">    <span class="cm">//BlueButtonText.startMoveAnimation(BlueButtonText.getX() + textAreaMoveXDistance, BlueButtonText.getY(), textAreaMoveDuration);</span></div><div class="m" style="left:417px;top:321px;color:#787878">16</div><div class="m" style="left:444px;top:321px">}</div><div class="m" style="left:417px;top:336px;color:#787878">17</div><div class="m" style="left:417px;top:351px;color:#787878">18</div><div class="m" style="left:444px;top:351px"><span class="kw">void</span> <span class="b">MainView::tearDownScreen</span>()</div><div class="m" style="left:417px;top:366px;color:#787878">19</div><div class="m" style="left:444px;top:366px">{</div><div class="m" style="left:417px;top:381px;color:#787878">20</div><div class="m" style="left:444px;top:381px">    <span class="cls">MainViewBase</span>::tearDownScreen();</div><div class="m" style="left:417px;top:396px;color:#787878">21</div><div class="m" style="left:444px;top:396px">}</div><div class="m" style="left:417px;top:411px;color:#787878">22</div><div class="m" style="left:417px;top:426px;color:#787878">23</div><div class="m" style="left:444px;top:426px"><span class="cm">/*******************************</span></div><div class="m" style="left:417px;top:441px;color:#787878">24</div><div class="m" style="left:444px;top:441px"><span class="cm">void MainView::RotateTouchGFXLogo()</span></div><div class="m" style="left:417px;top:456px;color:#787878">25</div><div class="m" style="left:444px;top:456px"><span class="cm">{</span></div><div class="m" style="left:417px;top:471px;color:#787878">26</div><div class="m" style="left:444px;top:471px"><span class="cm">    if (!textureTouchGFXLogo.isTextureMapperAnimationRunning())</span></div><div class="m" style="left:417px;top:486px;color:#787878">27</div><div class="m" style="left:444px;top:486px"><span class="cm">    {</span></div><div class="m" style="left:417px;top:501px;color:#787878">28</div><div class="m" style="left:444px;top:501px"><span class="cm">        textureRotationEndAngle = textureRotationEndAngle + pi / 3;</span></div><svg style="left:432px;top:127px" width="9" height="9" viewBox="0 0 9 9"><circle cx="4.5" cy="4.5" r="4" fill="#e8eef5" stroke="#8ea6c0" stroke-width="1"/><path d="M2.2 4.5 h4.6" stroke="#4a6a8a" stroke-width="1.1"/></svg><svg style="left:432px;top:247px" width="9" height="9" viewBox="0 0 9 9"><circle cx="4.5" cy="4.5" r="4" fill="#e8eef5" stroke="#8ea6c0" stroke-width="1"/><path d="M2.2 4.5 h4.6" stroke="#4a6a8a" stroke-width="1.1"/></svg><svg style="left:432px;top:352px" width="9" height="9" viewBox="0 0 9 9"><circle cx="4.5" cy="4.5" r="4" fill="#e8eef5" stroke="#8ea6c0" stroke-width="1"/><path d="M2.2 4.5 h4.6" stroke="#4a6a8a" stroke-width="1.1"/></svg><svg style="left:432px;top:427px" width="9" height="9" viewBox="0 0 9 9"><circle cx="4.5" cy="4.5" r="4" fill="#e8eef5" stroke="#8ea6c0" stroke-width="1"/><path d="M2.2 4.5 h4.6" stroke="#4a6a8a" stroke-width="1.1"/></svg><svg style="left:407px;top:247px" width="11" height="6" viewBox="0 0 11 6"><path d="M0.5 5.5 L5.5 0.5 L10.5 5.5Z" fill="#4cb25a" stroke="#1f6f2f" stroke-width="1"/></svg><svg style="left:407px;top:352px" width="11" height="6" viewBox="0 0 11 6"><path d="M0.5 5.5 L5.5 0.5 L10.5 5.5Z" fill="#4cb25a" stroke="#1f6f2f" stroke-width="1"/></svg><div class="a" style="left:486px;top:305px;width:2px;height:13px;background:#000;"></div><div class="a" style="left:441px;top:515px;width:1014px;height:15px;background:#f0f0f0;"></div><div class="a" style="left:459px;top:516px;width:910px;height:13px;background:#cdcdcd;"></div><svg style="left:447px;top:519px" width="6" height="8" viewBox="0 0 6 8"><path d="M5 0.5 L1 4 L5 7.5" stroke="#505050" stroke-width="1.8" fill="none"/></svg><div class="a" style="left:406px;top:537px;width:136px;height:24px;background:#e6e6e6;"></div><div class="a" style="left:542px;top:537px;width:92px;height:24px;background:#f7f7f7;"></div><div class="a" style="left:634px;top:537px;width:649px;height:24px;background:#e6e6e6;"></div><svg style="left:410px;top:541px" width="16" height="16" viewBox="0 0 16 16"><path d="M3.5 1.5 h7 l2 2 v11 h-9z" fill="#f4f6fa" stroke="#8da0b8" stroke-width="1"/><circle cx="5.5" cy="5" r="2.5" fill="#d42a2a"/><path d="M0.5 15.5 L3.5 9.5 L6.5 15.5Z" fill="#f3c65a" stroke="#b88a2a" stroke-width="0.7"/></svg><div class="t" style="left:430px;top:543px;letter-spacing:-0.1px">Problems</div><svg style="left:488px;top:541px" width="16" height="16" viewBox="0 0 16 16"><rect x="4.5" y="2.5" width="10" height="12" fill="#f6f2e6" stroke="#b0a070" stroke-width="1"/><rect x="7" y="1" width="5" height="3" fill="#9a8abf"/><path d="M1 9 L4 12 L9 6" stroke="#2a6fc9" stroke-width="1.6" fill="none"/><path d="M9 8 h4 M9 10.5 h4" stroke="#5a7ab0" stroke-width="1"/></svg><div class="t" style="left:509px;top:543px;letter-spacing:-0.1px">Tasks</div><svg style="left:547px;top:541px" width="16" height="16" viewBox="0 0 16 16"><rect x="1.5" y="2.5" width="13" height="9" rx="1" fill="#dbe8f6" stroke="#2e5b9a" stroke-width="1.6"/><path d="M4 5.5 h7 M4 8 h5" stroke="#2e5b9a" stroke-width="1"/><path d="M5 14.5 h6" stroke="#2e5b9a" stroke-width="1.5"/></svg><div class="t" style="left:566px;top:543px;letter-spacing:-0.1px">Console</div><svg style="left:642px;top:541px" width="16" height="16" viewBox="0 0 16 16"><rect x="1.5" y="1.5" width="13" height="13" fill="#f7f7f7" stroke="#7a8aa0" stroke-width="1"/><path d="M1.5 4.5 h13 M5.5 4.5 v10 M1.5 7.5 h13 M1.5 10.5 h13" stroke="#7a8aa0" stroke-width="0.8"/></svg><div class="t" style="left:660px;top:543px;letter-spacing:-0.1px">Properties</div><svg style="left:724px;top:541px" width="16" height="16" viewBox="0 0 16 16"><circle cx="8" cy="8" r="6.5" fill="#e9f6ec" stroke="#3a9a50" stroke-width="1.2"/><circle cx="8" cy="8" r="3.8" fill="none" stroke="#3a9a50" stroke-width="1.2"/><circle cx="8" cy="8" r="1.6" fill="#3a9a50"/></svg><div class="t" style="left:742px;top:543px;letter-spacing:-0.1px">Build Targets</div><svg style="left:820px;top:541px" width="16" height="16" viewBox="0 0 16 16"><rect x="0.5" y="1.5" width="5" height="4" fill="#dbe8f6" stroke="#2e5b9a" stroke-width="1"/><rect x="0.5" y="9.5" width="5" height="4" fill="#dbe8f6" stroke="#2e5b9a" stroke-width="1"/><path d="M8 3.5 h7 M8 7 h5 M8 11.5 h7" stroke="#2e5b9a" stroke-width="1.2"/></svg><div class="t" style="left:839px;top:543px;letter-spacing:-0.1px">Outline</div><svg style="left:617px;top:545px" width="10" height="10" viewBox="0 0 10 10"><path d="M0.5 0.5 L9 9 M9 0.5 L0.5 9" stroke="#222" stroke-width="1.1"/></svg><div class="t" style="left:406px;top:563px;letter-spacing:-0.5px">CDT Build Console [STM32H735G_DISCO-BUTTON-SAMPLE-FROM-GUI-TASK]</div><div class="a" style="left:406px;top:577px;width:861px;height:1px;background:#a0a0a0;"></div><div class="a" style="left:406px;top:578px;width:861px;height:222px;overflow:hidden;background:#fff"><div class="m" style="left:2px;top:-3px;tab-size:8">arm-none-eabi-g++  D:/TouchGFX/Projects/ChamberLight/TouchGFX/gui/src/main_screen/MainView.cpp  -mcpu=cortex-m7 -std=gnu++1</div><div class="m" style="left:2px;top:12px;tab-size:8">arm-none-eabi-g++ "D:/TouchGFX/Projects/ChamberLight/TouchGFX/target/generated/TouchGFXGeneratedHAL.cpp" -mcpu=cortex-m7 -std=gnu++1</div><div class="m" style="left:2px;top:27px;tab-size:8">arm-none-eabi-g++ -o "STM32H735G_DISCO-BUTTON-SAMPLE-FROM-GUI-TASK.elf" @"objects.list"  -l:libtouchgfx-float-abi-hard.a -mcpu</div><div class="m" style="left:2px;top:42px;tab-size:8">Finished building target: STM32H735G_DISCO-BUTTON-SAMPLE-FROM-GUI-TASK.elf</div><div class="m" style="left:2px;top:72px;tab-size:8">arm-none-eabi-size  STM32H735G_DISCO-BUTTON-SAMPLE-FROM-GUI-TASK.elf</div><div class="m" style="left:2px;top:87px;tab-size:8">arm-none-eabi-objdump -h -S STM32H735G_DISCO-BUTTON-SAMPLE-FROM-GUI-TASK.elf  &gt; "STM32H735G_DISCO-BUTTON-SAMPLE-FROM-GUI-TASK.list"</div><div class="m" style="left:2px;top:102px;tab-size:8">arm-none-eabi-objcopy  -O ihex STM32H735G_DISCO-BUTTON-SAMPLE-FROM-GUI-TASK.elf  "STM32H735G_DISCO-BUTTON-SAMPLE-FROM-GUI-TASK.hex"</div><div class="m" style="left:2px;top:117px;tab-size:8">   text	   data	    bss	    dec	    hex	filename</div><div class="m" style="left:2px;top:132px;tab-size:8"> 575666	    780	  38432	 614878	  961de	STM32H735G_DISCO-BUTTON-SAMPLE-FROM-GUI-TASK.elf</div><div class="m" style="left:2px;top:147px;tab-size:8">Finished building: default.size.stdout</div><div class="m" style="left:2px;top:177px;tab-size:8">Finished building: STM32H735G_DISCO-BUTTON-SAMPLE-FROM-GUI-TASK.hex</div><div class="m" style="left:2px;top:207px;tab-size:8">Finished building: STM32H735G_DISCO-BUTTON-SAMPLE-FROM-GUI-TASK.list</div></div><div class="a" style="left:1267px;top:578px;width:16px;height:222px;background:#f0f0f0;"></div><div class="a" style="left:1268px;top:616px;width:14px;height:124px;background:#cdcdcd;"></div><svg style="left:1271px;top:585px" width="8" height="6" viewBox="0 0 8 6"><path d="M0.5 5 L4 1 L7.5 5" stroke="#505050" stroke-width="1.8" fill="none"/></svg><svg style="left:1271px;top:787px" width="8" height="6" viewBox="0 0 8 6"><path d="M0.5 1 L4 5 L7.5 1" stroke="#505050" stroke-width="1.8" fill="none"/></svg><div class="a" style="left:406px;top:800px;width:877px;height:16px;background:#f0f0f0;"></div><div class="a" style="left:423px;top:801px;width:69px;height:14px;background:#cdcdcd;"></div><svg style="left:410px;top:804px" width="6" height="8" viewBox="0 0 6 8"><path d="M5 0.5 L1 4 L5 7.5" stroke="#505050" stroke-width="1.8" fill="none"/></svg><svg style="left:1253px;top:804px" width="6" height="8" viewBox="0 0 6 8"><path d="M1 0.5 L5 4 L1 7.5" stroke="#505050" stroke-width="1.8" fill="none"/></svg><div class="a" style="left:1289px;top:537px;width:60px;height:24px;background:#e6e6e6;"></div><div class="a" style="left:1363px;top:537px;width:55px;height:24px;background:#f7f7f7;"></div><div class="a" style="left:1349px;top:537px;width:14px;height:24px;background:#e6e6e6;"></div><div class="a" style="left:1418px;top:537px;width:37px;height:24px;background:#e6e6e6;"></div><svg style="left:1295px;top:542px" width="16" height="16" viewBox="0 0 16 16"><path d="M2.5 0.5 h7.5 l3 3 v12 h-10.5z" fill="#f3f6fa" stroke="#8da0b8" stroke-width="1"/><path d="M4 4 h5 M4 6 h7" stroke="#7a8ab0" stroke-width="0.8"/><text x="2.5" y="14.5" font-family="Liberation Mono" font-weight="bold" font-size="6" fill="#1f3f6a">010</text></svg><div class="t" style="left:1313px;top:543px;">B</div><svg style="left:1330px;top:542px" width="16" height="16" viewBox="0 0 16 16"><path d="M1 14.5 h14 M2 11.5 h12 M4 8.5 h8 M6 5.5 h6" stroke="#1f3f7a" stroke-width="1.8"/><rect x="7" y="1" width="3" height="2" fill="#bbb"/></svg><div class="t" style="left:1348px;top:543px;">S</div><svg style="left:1367px;top:542px" width="16" height="16" viewBox="0 0 16 16"><ellipse cx="8.5" cy="9" rx="4" ry="5" fill="#7fc0a0" stroke="#2f7f5a" stroke-width="1"/><path d="M2 5 L5 7 M15 5 L12 7 M1 9 h3 M13 9 h3 M2 14 L5 11 M15 14 L12 11 M6 2 L7 4 M11 2 L10 4" stroke="#2f7f5a" stroke-width="1.1"/></svg><div class="t" style="left:1385px;top:543px;">D</div><svg style="left:1401px;top:545px" width="10" height="10" viewBox="0 0 10 10"><path d="M0.5 0.5 L9 9 M9 0.5 L0.5 9" stroke="#222" stroke-width="1.1"/></svg><div class="t" style="left:1426px;top:542px;font-size:13px;font-weight:bold;letter-spacing:-1px">&#187;</div><div class="t" style="left:1433px;top:547px;font-size:10px">2</div><div class="a" style="left:1289px;top:561px;width:166px;height:24px;background:#f0f0f0;"></div><svg style="left:1411px;top:566px" width="14" height="14" viewBox="0 0 14 14"><rect x="0.5" y="0.5" width="10" height="10" fill="#e8eef6" stroke="#8aa0c0" stroke-width="1"/><rect x="3.5" y="3.5" width="10" height="10" fill="#f4f8fc" stroke="#6a88b0" stroke-width="1"/><path d="M5.5 8.5 h6" stroke="#2e5b9a" stroke-width="1.5"/></svg><svg style="left:1433px;top:564px" width="16" height="16" viewBox="0 0 16 16"><path d="M2 3 L14 15 M14 3 L2 15" stroke="#707070" stroke-width="3"/><path d="M5 1 L15 11 M15 1 L5 11" stroke="#909090" stroke-width="2.2"/></svg><div class="a" style="left:1289px;top:584px;width:166px;height:216px;background:#ffffff;"></div><div class="a" style="left:1306px;top:584px;width:149px;height:18px;background:#d9d9d9;"></div><svg style="left:1294px;top:589px" width="9" height="6" viewBox="0 0 9 6"><path d="M0.5 1 L4.5 5 L8.5 1" stroke="#404040" stroke-width="1.6" fill="none"/></svg><svg style="left:1310px;top:585px" width="16" height="16" viewBox="0 0 16 16"><rect x="1.5" y="2.5" width="11" height="11" rx="1.5" fill="#d8283a" stroke="#f08a90" stroke-width="1"/><rect x="1" y="2" width="12" height="12" rx="2" fill="none" stroke="#c02030" stroke-width="0.6"/></svg><div class="t" style="left:1330px;top:586px;letter-spacing:0.3px">&lt;terminated&gt; &lt;unknown&gt;</div><svg style="left:1324px;top:603px" width="16" height="16" viewBox="0 0 16 16"><rect x="5.5" y="0.5" width="8" height="14" rx="1" fill="#c8c8cc" stroke="#9a9aa0" stroke-width="1"/><rect x="7" y="2" width="5" height="3" fill="#d89090"/><path d="M6 7 h7 M6 10 h7" stroke="#eee" stroke-width="1"/><rect x="0.5" y="8.5" width="6" height="6" fill="#d8283a" stroke="#b01828" stroke-width="0.8"/></svg><div class="t" style="left:1346px;top:605px;letter-spacing:0.2px">&lt;terminated, exit value: 0&gt;</div><svg style="left:1324px;top:621px" width="16" height="16" viewBox="0 0 16 16"><rect x="5.5" y="0.5" width="8" height="14" rx="1" fill="#c8c8cc" stroke="#9a9aa0" stroke-width="1"/><rect x="7" y="2" width="5" height="3" fill="#d89090"/><path d="M6 7 h7 M6 10 h7" stroke="#eee" stroke-width="1"/><rect x="0.5" y="8.5" width="6" height="6" fill="#d8283a" stroke="#b01828" stroke-width="0.8"/></svg><div class="t" style="left:1346px;top:623px;letter-spacing:0.2px">&lt;terminated, exit value: 0&gt;</div><div class="a" style="left:1289px;top:800px;width:166px;height:16px;background:#f0f0f0;"></div><div class="a" style="left:1306px;top:801px;width:69px;height:14px;background:#cdcdcd;"></div><svg style="left:1294px;top:804px" width="6" height="8" viewBox="0 0 6 8"><path d="M5 0.5 L1 4 L5 7.5" stroke="#505050" stroke-width="1.8" fill="none"/></svg><div class="a" style="left:1px;top:800px;width:399px;height:16px;background:#f0f0f0;"></div><div class="a" style="left:18px;top:801px;width:112px;height:14px;background:#cdcdcd;"></div><svg style="left:6px;top:804px" width="6" height="8" viewBox="0 0 6 8"><path d="M5 0.5 L1 4 L5 7.5" stroke="#505050" stroke-width="1.8" fill="none"/></svg><svg style="left:388px;top:804px" width="6" height="8" viewBox="0 0 6 8"><path d="M1 0.5 L5 4 L1 7.5" stroke="#505050" stroke-width="1.8" fill="none"/></svg><svg style="left:5px;top:73px" width="16" height="16" viewBox="0 0 16 16"><path d="M0.5 0.5 h6 l2 2 v8 h-8z" fill="#f4f4f0" stroke="#a0a0a0"/><path d="M2 3 h4 M2 5 h4 M2 7 h3" stroke="#b0b0b0" stroke-width="0.8"/><path d="M5.5 8.5 h3 l1 1 h5 v6 h-9z" fill="#f6d37d" stroke="#b08a3a"/></svg><svg style="left:117px;top:78px" width="10" height="10" viewBox="0 0 10 10"><path d="M0.5 0.5 L9 9 M9 0.5 L0.5 9" stroke="#222" stroke-width="1.1"/></svg><svg style="left:264px;top:75px" width="14" height="14" viewBox="0 0 14 14"><rect x="0.5" y="0.5" width="10" height="10" fill="#eef2f8" stroke="#9aaac0"/><rect x="3.5" y="3.5" width="10" height="10" fill="#f6f9fc" stroke="#7a90b0"/><path d="M5.5 8.5 h6" stroke="#2e5b9a" stroke-width="1.5"/></svg><svg style="left:285px;top:73px" width="16" height="16" viewBox="0 0 16 16"><path d="M1 5 L5 1 v2.5 h6 v3 h-6 v2.5z" fill="#fbe08a" stroke="#c09020"/><path d="M15 11 L11 7 v2.5 h-6 v3 h6 v2.5z" fill="#fbe08a" stroke="#c09020"/></svg><svg style="left:309px;top:74px" width="14" height="15" viewBox="0 0 14 15"><path d="M0.5 1.5 h13 L8.5 7.5 v7 l-3 -2 v-5z" fill="#dcecf8" stroke="#6a8ab0"/></svg><svg style="left:337px;top:74px" width="6" height="15" viewBox="0 0 6 15"><circle cx="2.5" cy="2.5" r="1.8" fill="none" stroke="#505050" stroke-width="1"/><circle cx="2.5" cy="7.5" r="1.8" fill="none" stroke="#505050" stroke-width="1"/><circle cx="2.5" cy="12.5" r="1.8" fill="none" stroke="#505050" stroke-width="1"/></svg><svg style="left:357px;top:76px" width="10" height="4" viewBox="0 0 10 4"><rect x="0.6" y="0.6" width="9" height="3" fill="#fff" stroke="#000" stroke-width="1.2"/></svg><svg style="left:380px;top:76px" width="10" height="11" viewBox="0 0 10 11"><rect x="0.6" y="0.6" width="9.2" height="9.8" fill="none" stroke="#000" stroke-width="1.2"/><path d="M0.6 2.2 h9.2" stroke="#000" stroke-width="1.2"/></svg><svg style="left:908px;top:542px" width="13" height="13" viewBox="0 0 13 13"><path d="M2 2 L11 11 M11 2 L2 11" stroke="#6a6a6a" stroke-width="3.2" stroke-linecap="round"/></svg><div class="a" style="left:929px;top:540px;width:1px;height:18px;background:#a8a8a8;"></div><svg style="left:939px;top:541px" width="14" height="15" viewBox="0 0 14 15"><path d="M4 1 h5 v6 h3 L6.5 13 L1 7 h3z" fill="#fbe08a" stroke="#c09020"/></svg><svg style="left:961px;top:541px" width="14" height="15" viewBox="0 0 14 15"><path d="M4 14 h5 v-6 h3 L6.5 2 L1 8 h3z" fill="#fbe08a" stroke="#c09020"/></svg><div class="a" style="left:981px;top:538px;width:23px;height:21px;background:#cce4f7;border:1px solid #99c9ef"></div><svg style="left:985px;top:541px" width="16" height="16" viewBox="0 0 16 16"><path d="M1 5 L5 1 v2.5 h8 v3 h-8 v2.5z" fill="#fbe08a" stroke="#b08020"/><path d="M15 11 L11 7 v2.5 h-8 v3 h8 v2.5z" fill="#fbe08a" stroke="#b08020"/></svg><div class="a" style="left:1006px;top:540px;width:1px;height:18px;background:#a8a8a8;"></div><svg style="left:1016px;top:542px" width="15" height="15" viewBox="0 0 15 15"><rect x="0.5" y="0.5" width="14" height="14" fill="#f0f4f8" stroke="#8a9ab0"/><path d="M10.5 0.5 v14" stroke="#8a9ab0"/><rect x="11.5" y="2" width="2" height="2" fill="#5a6a8a"/><rect x="11.5" y="6" width="2" height="2" fill="#5a6a8a"/><rect x="11.5" y="10" width="2" height="2" fill="#5a6a8a"/><rect x="1" y="10" width="5" height="4" fill="#9aaac0"/></svg><svg style="left:1039px;top:542px" width="15" height="15" viewBox="0 0 15 15"><rect x="0.5" y="0.5" width="14" height="14" fill="#f0f4f8" stroke="#8a9ab0"/><path d="M10.5 0.5 v14" stroke="#8a9ab0"/><rect x="11.5" y="2" width="2" height="2" fill="#5a6a8a"/><rect x="11.5" y="6" width="2" height="2" fill="#5a6a8a"/><rect x="11.5" y="10" width="2" height="2" fill="#5a6a8a"/><rect x="0.5" y="9.5" width="7" height="6" fill="#f4d25a" stroke="#8a6a20"/><path d="M2 9.5 v-2 a2 2 0 0 1 4 0 v2" fill="none" stroke="#8a6a20"/></svg><svg style="left:1063px;top:541px" width="14" height="14" viewBox="0 0 14 14"><path d="M1 4 h11 M1 6.5 h9 M1 9 h5" stroke="#a8b8c8" stroke-width="1"/></svg><svg style="left:1085px;top:541px" width="16" height="16" viewBox="0 0 16 16"><path d="M0.5 0.5 h7 l3 3 v11 h-10z" fill="#f4f6fa" stroke="#8a9ab0"/><path d="M2 5 h6 M2 7.5 h6 M2 10 h5 M2 12.5 h4" stroke="#4a6a9a"/><path d="M10 10 L15 15 M15 10 L10 15" stroke="#707070" stroke-width="1.8"/></svg><div class="a" style="left:1104px;top:538px;width:23px;height:21px;background:#cce4f7;border:1px solid #99c9ef"></div><svg style="left:1107px;top:541px" width="16" height="16" viewBox="0 0 16 16"><rect x="4.5" y="0.5" width="11" height="8" rx="1" fill="#f4f8fc" stroke="#3a5a80"/><path d="M7 3.5 h6 M7 5.5 h4" stroke="#3a5a80"/><rect x="0.5" y="5.5" width="8" height="6" rx="1" fill="#dbe8f6" stroke="#2e5b9a"/><path d="M3 14 h3" stroke="#2e5b9a" stroke-width="1.5"/></svg><div class="a" style="left:1129px;top:540px;width:1px;height:18px;background:#a8a8a8;"></div><svg style="left:1140px;top:541px" width="16" height="16" viewBox="0 0 16 16"><rect x="0.5" y="3.5" width="13" height="11" fill="#eaf3fb" stroke="#5a6a80"/><rect x="1" y="4" width="12" height="2" fill="#5a8ac0"/><path d="M7 10 L11 5" stroke="#2a7a3a" stroke-width="1.5"/><circle cx="12" cy="3.5" r="2.5" fill="#3aa04a"/></svg><svg style="left:1164px;top:542px" width="14" height="15" viewBox="0 0 14 15"><rect x="0.5" y="0.5" width="13" height="10" rx="1.5" fill="#e8f0f8" stroke="#3a5a8a" stroke-width="1.6"/><path d="M3.5 4 h6 M3.5 6.5 h4" stroke="#3a5a8a"/><path d="M4 13.5 h6" stroke="#3a5a8a" stroke-width="1.8"/></svg><svg style="left:1185px;top:548px" width="8" height="4" viewBox="0 0 8 4"><path d="M0 0 h8 L4 4z" fill="#202020"/></svg><svg style="left:1201px;top:541px" width="16" height="16" viewBox="0 0 16 16"><rect x="0.5" y="3.5" width="13" height="10" fill="#eaf3fb" stroke="#5a6a80" stroke-width="1"/><rect x="1" y="4" width="12" height="2" fill="#5a8ac0"/><path d="M12 0 l1.2 2.3 2.3 1.2 -2.3 1.2 -1.2 2.3 -1.2 -2.3 -2.3 -1.2 2.3 -1.2z" fill="#f4d25a" stroke="#c09020" stroke-width="0.5"/></svg><svg style="left:1223px;top:548px" width="8" height="4" viewBox="0 0 8 4"><path d="M0 0 h8 L4 4z" fill="#202020"/></svg><svg style="left:1240px;top:544px" width="10" height="4" viewBox="0 0 10 4"><rect x="0.6" y="0.6" width="9" height="3" fill="#fff" stroke="#000" stroke-width="1.2"/></svg><svg style="left:1262px;top:544px" width="11" height="11" viewBox="0 0 11 11"><rect x="0.6" y="0.6" width="9.2" height="9.8" fill="none" stroke="#000" stroke-width="1.2"/><path d="M0.6 2.2 h9.2" stroke="#000" stroke-width="1.2"/></svg><div class="a" style="left:0px;top:817px;width:1455px;height:25px;background:#f0f0f0;"></div><div class="a" style="left:802px;top:817px;width:30px;height:21px;border:1px solid #d0d0d0;border-top:none;background:#f0f0f0"></div><svg style="left:808px;top:820px" width="16" height="16" viewBox="0 0 16 16"><circle cx="6" cy="9" r="4.5" fill="#f1e2b8" stroke="#b49a60" stroke-width="1"/><rect x="8.5" y="7.5" width="7" height="6" fill="#dde6f0" stroke="#7a8aa0" stroke-width="1"/><path d="M3 5 L6 2 L7 5" stroke="#d0a040" stroke-width="1.2" fill="none"/></svg><div class="a" style="left:835px;top:818px;width:1px;height:20px;background:#c8c8c8;"></div><div class="a" style="left:969px;top:818px;width:1px;height:20px;background:#c8c8c8;"></div><div class="a" style="left:1097px;top:818px;width:1px;height:20px;background:#c8c8c8;"></div><div class="t" style="left:843px;top:821px;">Writable</div><div class="t" style="left:977px;top:821px;">Smart Insert</div><div class="t" style="left:1105px;top:821px;letter-spacing:-0.3px">15 : 7 : 436</div><div class="a" style="left:1224px;top:823px;width:1px;height:2px;background:#b8b8b8;"></div><div class="a" style="left:1224px;top:827px;width:1px;height:2px;background:#b8b8b8;"></div><div class="a" style="left:1224px;top:831px;width:1px;height:2px;background:#b8b8b8;"></div><div class="a" style="left:1224px;top:835px;width:1px;height:2px;background:#b8b8b8;"></div><svg style="left:1370px;top:755px" width="85" height="62" viewBox="0 0 85 62"><path d="M38 4 h34 a5 5 0 0 1 5 5 v33 l-0.5 0 C74 40 72 37 70 33 h-16 v-2 a7 7 0 0 0 -7 -7 h-16 v-15 a5 5 0 0 1 5 -5z" fill="#a3afbe"/><path d="M11 22 h34 a6 6 0 0 1 6 6 v16 a6 6 0 0 1 -6 6 h-28 C14 53 11 56 7 59 l0 -31 a6 6 0 0 1 4 -6z" fill="#a3afbe" stroke="#ffffff" stroke-width="3"/><circle cx="15.2" cy="37" r="3.3" fill="#fff"/><circle cx="27.1" cy="37" r="3.3" fill="#fff"/><circle cx="39" cy="37" r="3.3" fill="#fff"/></svg><div class="t" style="left:1378px;top:820px;color:#a8a8a8;font-size:13px;letter-spacing:-0.5px">ST</div><svg style="left:1395px;top:820px" width="52" height="13" viewBox="0 0 52 13"><g stroke="#a8a8a8" stroke-width="1.1" fill="none"><rect x="1" y="3" width="10" height="5"/><path d="M6 0 v13"/><path d="M19 0 v2 M13 2.5 h12 M15 3 C17 8 20 11 25 12.5 M23 3 C21 8 18 11 13 12.5"/><path d="M28 1 l1.5 1.5 M27 5 h2 v6 l1.5 -1.5 M35 0.5 L31 5 M35 0.5 L39 5 M33 6 h4 M33 6 v6 h5 v-2"/><path d="M41 1 l1.5 1.5 M40 5 h2 v6 l1.5 -1.5 M45 2 h6 M44 6 h8 M48 6 L45 12 h7 l-1.5 -2"/></g></svg></body></html>
